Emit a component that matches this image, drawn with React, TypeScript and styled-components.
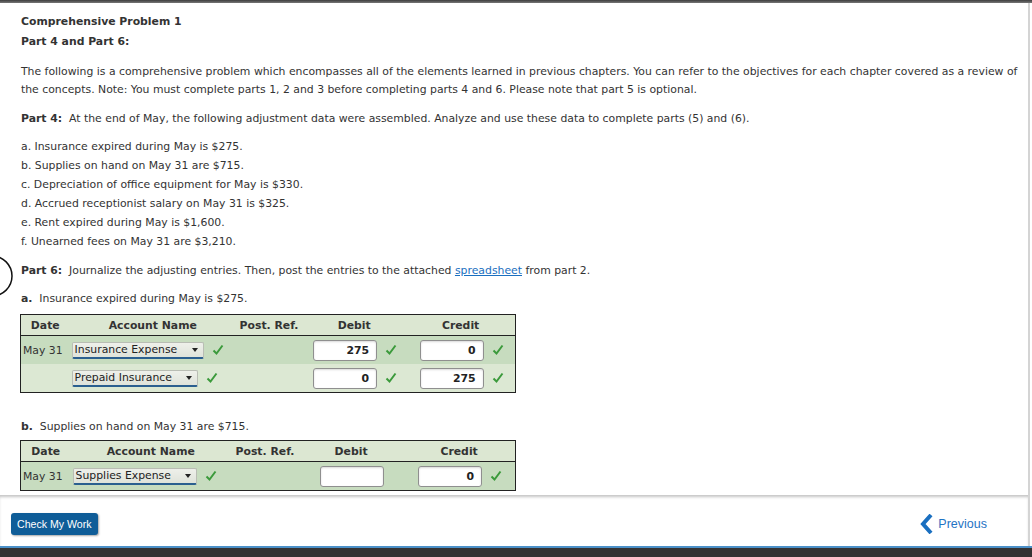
import React from "react";
import styled, { createGlobalStyle } from "styled-components";

const GlobalStyle = createGlobalStyle`
  html, body {
    margin: 0;
    padding: 0;
    background: #ffffff;
  }
  body {
    font-family: "DejaVu Sans", Verdana, sans-serif;
    font-size: 10.85px;
    color: #333333;
  }
`;

const Page = styled.div`
  width: 1032px;
  height: 557px;
  display: flex;
  flex-direction: column;
  overflow: hidden;
`;

const TopBar = styled.div`
  height: 3px;
  background: linear-gradient(#3e3e3e, #777777);
`;

const Main = styled.div`
  flex: 1;
  display: flex;
  min-height: 0;
`;

const Content = styled.div`
  position: relative;
  flex: 1;
  overflow: hidden;
  padding: 9px 0 0 21px;
  border-right: 2px solid #d4d4d4;
  margin-right: 2px;
`;

const Heading = styled.div`
  font-weight: bold;
  line-height: 20px;
`;

const Para = styled.p<{ $top?: number }>`
  margin: ${(p) => p.$top ?? 11}px 0 0;
  line-height: 18px;
`;

const List = styled.ul`
  list-style: none;
  margin: 9px 0 0;
  padding: 0;
`;

const Item = styled.li`
  line-height: 19px;
`;

const Link = styled.a`
  color: #1a6fc0;
  text-decoration: underline;
`;

const Ring = styled.svg`
  position: absolute;
  left: 0;
  top: 250px;
`;

const Table = styled.table<{ $top: number }>`
  margin: ${(p) => p.$top}px 0 0 -1px;
  width: 496px;
  border-collapse: collapse;
  table-layout: fixed;
  border: 1px solid #222222;
`;

const HeadRow = styled.tr`
  background: #dce7d2;
  border-bottom: 1px solid #222222;
`;

const Th = styled.th`
  height: 20px;
  padding: 0;
  font-weight: bold;
  text-align: center;
`;

const Row = styled.tr<{ $shade: "dark" | "light" }>`
  background: ${(p) => (p.$shade === "dark" ? "#c7dcbf" : "#dce8d3")};
`;

const Td = styled.td<{ $align?: "left" | "center" }>`
  height: 28px;
  padding: 0 0 0 2px;
  text-align: ${(p) => p.$align ?? "left"};
  white-space: nowrap;
`;

const Cell = styled.div<{ $center?: boolean }>`
  display: flex;
  align-items: center;
  justify-content: ${(p) => (p.$center ? "center" : "flex-start")};
  gap: 8px;
`;

const Select = styled.div<{ $w: number }>`
  box-sizing: border-box;
  width: ${(p) => p.$w}px;
  height: 17px;
  display: flex;
  align-items: center;
  justify-content: space-between;
  padding: 0 5px 0 2px;
  background: linear-gradient(#eef0ea, #dfe3da);
  border: 1px solid #b9bdb4;
  border-bottom: 2px solid #2b5f8f;
  border-radius: 2px;
  color: #222222;
`;

const Arrow = styled.span`
  width: 0;
  height: 0;
  border-left: 3px solid transparent;
  border-right: 3px solid transparent;
  border-top: 4px solid #222222;
`;

const Input = styled.div`
  box-sizing: border-box;
  width: 64px;
  height: 21px;
  padding: 0 7px;
  line-height: 19px;
  text-align: right;
  font-weight: bold;
  color: #222222;
  background: #ffffff;
  border: 1px solid #8f8f8f;
  border-radius: 3px;
  box-shadow: inset 0 1px 2px rgba(0, 0, 0, 0.15);
`;

const CheckSvg = styled.svg`
  flex: none;
`;

const Footer = styled.div`
  height: 51px;
  display: flex;
  align-items: center;
  justify-content: space-between;
  padding: 7px 41px 0 11px;
  box-sizing: border-box;
  border-right: 2px solid #d4d4d4;
  margin-right: 2px;
  box-shadow: inset 0 3px 3px -1px #c4c4c4;
`;

const CheckButton = styled.button`
  height: 22px;
  padding: 0 6px;
  border: none;
  border-radius: 3px;
  background: #0f5d98;
  color: #ffffff;
  font-family: "Liberation Sans", Arial, sans-serif;
  font-size: 10.6px;
  box-shadow: 1px 1px 2px rgba(0, 0, 0, 0.35);
`;

const Previous = styled.div`
  display: flex;
  align-items: center;
  gap: 5px;
  color: #1f74c4;
  font-family: "Liberation Sans", Arial, sans-serif;
  font-size: 12.5px;
`;

const BottomBar = styled.div`
  height: 9px;
  background: #333333;
  border-top: 2px solid #4b90c8;
`;

const Check = () => (
  <CheckSvg width="12" height="12" viewBox="0 0 12 12">
    <path d="M1.5 6.5 L4.5 9.5 L10.5 1.5" fill="none" stroke="#3b9a3b" strokeWidth="2" />
  </CheckSvg>
);

type Line = {
  date?: string;
  account: string;
  selectWidth: number;
  debit: string;
  debitOk: boolean;
  credit: string;
  creditOk: boolean;
};

const Journal: React.FC<{ top: number; widths: number[]; lines: Line[] }> = ({
  top,
  widths,
  lines,
}) => (
  <Table $top={top}>
    <colgroup>
      {widths.map((w, i) => (
        <col key={i} style={{ width: w }} />
      ))}
    </colgroup>
    <thead>
      <HeadRow>
        <Th>Date</Th>
        <Th>Account Name</Th>
        <Th>Post. Ref.</Th>
        <Th>Debit</Th>
        <Th>Credit</Th>
      </HeadRow>
    </thead>
    <tbody>
      {lines.map((l, i) => (
        <Row key={i} $shade={i % 2 === 0 ? "dark" : "light"}>
          <Td>{l.date}</Td>
          <Td>
            <Cell>
              <Select $w={l.selectWidth}>
                <span>{l.account}</span>
                <Arrow />
              </Select>
              <Check />
            </Cell>
          </Td>
          <Td />
          <Td $align="center">
            <Cell $center>
              <Input>{l.debit}</Input>
              {l.debitOk && <Check />}
            </Cell>
          </Td>
          <Td $align="center">
            <Cell $center>
              <Input>{l.credit}</Input>
              {l.creditOk && <Check />}
            </Cell>
          </Td>
        </Row>
      ))}
    </tbody>
  </Table>
);

const App: React.FC = () => {
  return (
    <>
      <GlobalStyle />
      <Page>
        <TopBar />
        <Main>
          <Content>
            <Heading>Comprehensive Problem 1</Heading>
            <Heading>Part 4 and Part 6:</Heading>
            <Para>
              The following is a comprehensive problem which encompasses all of the elements
              learned in previous chapters. You can refer to the objectives for each chapter
              covered as a review of the concepts. Note: You must complete parts 1, 2 and 3
              before completing parts 4 and 6. Please note that part 5 is optional.
            </Para>
            <Para>
              <b>Part 4:</b>&nbsp; At the end of May, the following adjustment data were
              assembled. Analyze and use these data to complete parts (5) and (6).
            </Para>
            <List>
              <Item>a. Insurance expired during May is $275.</Item>
              <Item>b. Supplies on hand on May 31 are $715.</Item>
              <Item>c. Depreciation of office equipment for May is $330.</Item>
              <Item>d. Accrued receptionist salary on May 31 is $325.</Item>
              <Item>e. Rent expired during May is $1,600.</Item>
              <Item>f. Unearned fees on May 31 are $3,210.</Item>
            </List>
            <Para>
              <b>Part 6:</b>&nbsp; Journalize the adjusting entries. Then, post the entries to
              the attached <Link>spreadsheet</Link> from part 2.
            </Para>
            <Para $top={10}>
              <b>a.</b>&nbsp; Insurance expired during May is $275.
            </Para>
            <Journal
              top={6}
              widths={[49, 166, 66, 104, 109]}
              lines={[
                {
                  date: "May 31",
                  account: "Insurance Expense",
                  selectWidth: 132,
                  debit: "275",
                  debitOk: true,
                  credit: "0",
                  creditOk: true,
                },
                {
                  account: "Prepaid Insurance",
                  selectWidth: 126,
                  debit: "0",
                  debitOk: true,
                  credit: "275",
                  creditOk: true,
                },
              ]}
            />
            <Para $top={25}>
              <b>b.</b>&nbsp; Supplies on hand on May 31 are $715.
            </Para>
            <Journal
              top={4}
              widths={[50, 160, 68, 104, 112]}
              lines={[
                {
                  date: "May 31",
                  account: "Supplies Expense",
                  selectWidth: 124,
                  debit: "",
                  debitOk: false,
                  credit: "0",
                  creditOk: true,
                },
              ]}
            />
            <Ring width="14" height="46" viewBox="0 0 14 46">
              <circle cx="-8" cy="23" r="20" fill="none" stroke="#111111" strokeWidth="1.5" />
            </Ring>
          </Content>
        </Main>
        <Footer>
          <CheckButton>Check My Work</CheckButton>
          <Previous>
            <svg width="13" height="20" viewBox="0 0 13 20">
              <path d="M11 1 L3 10 L11 19" fill="none" stroke="#1a6fc0" strokeWidth="4" />
            </svg>
            Previous
          </Previous>
        </Footer>
        <BottomBar />
      </Page>
    </>
  );
};

export default App;
